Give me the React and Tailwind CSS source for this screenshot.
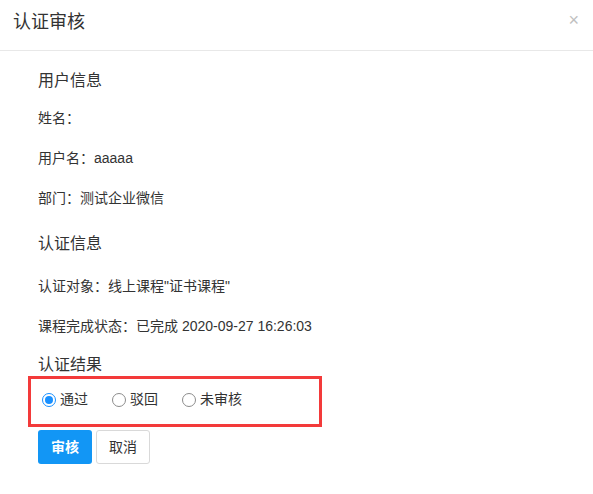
import React from "react";

function Radio({ checked, label }) {
  return (
    <label className="flex items-center gap-[4px] text-[14px] text-[#333]">
      <span
        className={
          "flex h-[14px] w-[14px] items-center justify-center rounded-full border bg-white " +
          (checked ? "border-[#1890ff]" : "border-[#8c8c8c]")
        }
      >
        {checked && <span className="h-[8px] w-[8px] rounded-full bg-[#1890ff]" />}
      </span>
      <span>{label}</span>
    </label>
  );
}

export default function App() {
  return (
    <div
      className="h-[494px] w-[593px] overflow-hidden bg-white text-[#333]"
      style={{ fontFamily: '"Liberation Sans", "Noto Sans CJK SC", sans-serif' }}
    >
      <div className="relative flex h-[51px] items-start border-b border-[#e8e8e8] pl-[13px] pt-[9px]">
        <span className="text-[18px] leading-[26px] text-[#333]">认证审核</span>
        <span className="absolute right-[14px] top-[9px] text-[18px] leading-[22px] text-[#c0c0c0]">×</span>
      </div>
      <div className="pl-[38px]">
        <div className="mt-[20px] text-[16px] leading-[20px]">用户信息</div>
        <div className="mt-[17px] text-[14px] leading-[20px]">姓名：</div>
        <div className="mt-[20px] text-[14px] leading-[20px]">用户名：aaaaa</div>
        <div className="mt-[20px] text-[14px] leading-[20px]">部门：测试企业微信</div>
        <div className="mt-[26px] text-[16px] leading-[20px]">认证信息</div>
        <div className="mt-[22px] text-[14px] leading-[20px]">认证对象：线上课程"证书课程"</div>
        <div className="mt-[20px] text-[14px] leading-[20px]">课程完成状态：已完成 2020-09-27 16:26:03</div>
        <div className="mt-[19px] text-[16px] leading-[20px]">认证结果</div>
        <div className="ml-[-10px] mt-[1px] flex h-[51px] w-[294px] items-center gap-[24px] border-[3px] border-[#f33a3a] pb-[4px] pl-[11px]">
          <Radio checked label="通过" />
          <Radio label="驳回" />
          <Radio label="未审核" />
        </div>
        <div className="mt-[3px] flex gap-[4px]">
          <button className="h-[34px] w-[54px] rounded-[3px] bg-[#1296f5] text-[14px] font-bold text-white">审核</button>
          <button className="h-[34px] w-[54px] rounded-[3px] border border-[#d9d9d9] bg-white text-[14px] text-[#333]">取消</button>
        </div>
      </div>
    </div>
  );
}
